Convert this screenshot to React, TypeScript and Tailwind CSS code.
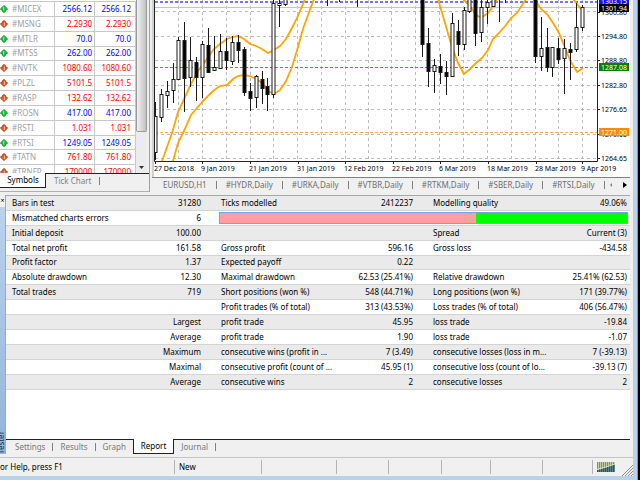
import { useState } from "react";

interface Quote {
  symbol: string;
  price: string;
  up: boolean;
}

const quotes: Quote[] = [
  { symbol: "#MICEX", price: "2566.12", up: true },
  { symbol: "#MSNG", price: "2.2930", up: false },
  { symbol: "#MTLR", price: "70.0", up: true },
  { symbol: "#MTSS", price: "262.00", up: true },
  { symbol: "#NVTK", price: "1080.60", up: false },
  { symbol: "#PLZL", price: "5101.5", up: false },
  { symbol: "#RASP", price: "132.62", up: false },
  { symbol: "#ROSN", price: "417.00", up: true },
  { symbol: "#RSTI", price: "1.031", up: false },
  { symbol: "#RTSI", price: "1249.05", up: true },
  { symbol: "#TATN", price: "761.80", up: false },
  { symbol: "#TRNFP", price: "170000", up: false },
];

const chartTabs = [
  "EURUSD,H1",
  "#HYDR,Daily",
  "#URKA,Daily",
  "#VTBR,Daily",
  "#RTKM,Daily",
  "#SBER,Daily",
  "#RTSI,Daily",
];

const reportRows: string[][] = [
  ["Initial deposit", "100.00", "", "", "Spread", "Current (3)"],
  ["Total net profit", "161.58", "Gross profit", "596.16", "Gross loss", "-434.58"],
  ["Profit factor", "1.37", "Expected payoff", "0.22", "", ""],
  ["Absolute drawdown", "12.30", "Maximal drawdown", "62.53 (25.41%)", "Relative drawdown", "25.41% (62.53)"],
  ["Total trades", "719", "Short positions (won %)", "548 (44.71%)", "Long positions (won %)", "171 (39.77%)"],
  ["", "", "Profit trades (% of total)", "313 (43.53%)", "Loss trades (% of total)", "406 (56.47%)"],
  ["", "Largest", "profit trade", "45.95", "loss trade", "-19.84"],
  ["", "Average", "profit trade", "1.90", "loss trade", "-1.07"],
  ["", "Maximum", "consecutive wins (profit in ...", "7 (3.49)", "consecutive losses (loss in m...", "7 (-39.13)"],
  ["", "Maximal", "consecutive profit (count of ...", "45.95 (1)", "consecutive loss (count of lo...", "-39.13 (7)"],
  ["", "Average", "consecutive wins", "2", "consecutive losses", "2"],
];

const testerTabs = ["Settings", "Results", "Graph", "Report", "Journal"];

// x, high, low, body top, body bottom, bearish
type Candle = [number, number, number, number, number, boolean];

const candles: Candle[] = [
  [155, 102, 160, 116, 152, false],
  [161, 89, 122, 94, 117, false],
  [167, 81, 108, 91, 95, false],
  [173, 63, 103, 79, 90, false],
  [178, 37, 80, 40, 79, false],
  [184, 22, 112, 40, 78, true],
  [190, 37, 87, 60, 77, false],
  [196, 57, 101, 62, 77, true],
  [202, 41, 98, 44, 77, false],
  [208, 28, 73, 45, 72, true],
  [214, 36, 71, 67, 70, false],
  [220, 34, 68, 51, 68, false],
  [226, 38, 70, 51, 60, true],
  [232, 36, 65, 42, 61, false],
  [238, 35, 63, 42, 50, true],
  [244, 47, 96, 49, 92, true],
  [250, 83, 111, 91, 98, true],
  [256, 75, 108, 76, 97, false],
  [262, 71, 104, 79, 88, true],
  [267, 78, 111, 86, 94, true],
  [273, -2, 98, 3, 94, false],
  [279, -2, 27, 3, 5, false],
  [285, -2, 6, -4, 4, false],
  [327, -2, 6, -2, -1, true],
  [339, -2, 2, -2, -1, true],
  [357, -2, 7, -2, -1, true],
  [422, -2, 57, -2, 44, true],
  [428, 28, 87, 43, 71, true],
  [434, 59, 93, 65, 71, false],
  [440, 54, 84, 66, 72, true],
  [446, 61, 95, 72, 76, true],
  [452, 13, 77, 23, 76, false],
  [458, 20, 56, 31, 44, true],
  [464, 7, 50, 10, 44, false],
  [469, -2, 13, -4, 11, false],
  [475, -2, 46, -4, 33, true],
  [481, -2, 42, 7, 32, false],
  [487, -2, 24, 2, 7, false],
  [493, -2, 7, -4, 6, false],
  [499, -2, 22, -4, -3, true],
  [505, -2, 3, -4, -3, true],
  [535, -2, 63, -4, 56, true],
  [541, 17, 71, 48, 56, false],
  [547, 28, 72, 47, 67, true],
  [552, 47, 77, 47, 67, false],
  [558, 38, 64, 48, 59, true],
  [564, 39, 94, 48, 58, false],
  [570, 43, 80, 49, 52, true],
  [576, 3, 52, 27, 49, false],
  [582, 5, 31, 7, 27, false],
];

const bands = [
  "162,161 172,133 178,112 185,97 191,84 198,71 207,59 213,50 220,44 227,39 232,37 238,36 244,39 250,44 256,46 262,49 268,53 274,50 280,46 286,39 292,28 298,16 305,-1",
  "173,161 178,143 184,131 191,115 203,101 213,91 220,86 227,85 233,79 238,76 244,75 250,76 256,79 262,83 268,91 274,94 280,90 286,81 292,67 298,47 303,29 308,15 314,-1",
  "438,-1 445,23 452,47 458,63 464,74 470,69 476,63 482,58 488,50 493,39 499,33 506,25 511,18 517,13 526,-1",
  "463,-1 470,6 476,15 480,17 484,16 488,13 494,5 497,-1",
  "535,0 541,9 547,14 553,23 559,33 565,48 571,62 577,72 583,68",
  "573,-1 577,4 582,10",
];

const gridX = [178, 202, 226, 250, 273, 297, 321, 345, 368, 391, 415, 439, 463, 487, 511, 535, 558, 582];
const gridY = [11, 36, 60, 85, 109, 134, 158];

const dates: [number, string][] = [
  [154, "27 Dec 2018"],
  [201, "9 Jan 2019"],
  [249, "21 Jan 2019"],
  [297, "31 Jan 2019"],
  [344, "12 Feb 2019"],
  [392, "22 Feb 2019"],
  [439, "6 Mar 2019"],
  [487, "18 Mar 2019"],
  [535, "28 Mar 2019"],
  [581, "9 Apr 2019"],
];

const prices: [number, string][] = [
  [12, "1300.80"],
  [36, "1294.80"],
  [60, "1288.80"],
  [85, "1282.80"],
  [109, "1276.65"],
  [134, "1270.65"],
  [158, "1264.65"],
];

const priceTags: [number, string, string][] = [
  [1, "1303.15", "#1414f0"],
  [8, "1301.94", "#000000"],
  [67, "1287.08", "#0a7d0a"],
  [132, "1271.00", "#ff8c00"],
];

const DirectionIcon = ({ up }: { up: boolean }) => (
  <svg width="8" height="8" viewBox="0 0 8 8" className={up ? "" : "rotate-180"}>
    <path
      d="M4 0.5 L7.5 3.8 L7 4.8 L5.4 5 L5.4 6.6 L4 7.5 L2.6 6.6 L2.6 5 L1 4.8 L0.5 3.8 Z"
      fill={up ? "#22c840" : "#ee5a2a"}
      stroke={up ? "#0b7d1e" : "#a03410"}
      strokeWidth="0.8"
    />
    <path d="M3.6 2 L3.6 5.6" stroke={up ? "#a6f5ae" : "#ffc0a0"} strokeWidth="0.9" />
  </svg>
);

/* -------------------- PRICE CHART -------------------- */
const PriceChart = () => (
  <svg
    viewBox="152 0 478 177"
    className="block w-full bg-white font-['Noto_Sans','Open_Sans',sans-serif] text-[7px]"
  >
    <g stroke="#bdbdbd" strokeDasharray="3 3">
      {gridX.map((x) => (
        <path key={x} d={`M${x + 0.5} 0 V161`} />
      ))}
      {gridY.map((y) => (
        <path key={y} d={`M155 ${y + 0.5} H598`} />
      ))}
    </g>
    <path d="M155 7.5 H598" stroke="#c4c4c4" />
    <path d="M155 2 H598" stroke="#7474ff" strokeWidth="2" strokeDasharray="3 2" />
    <path d="M155 67.5 H598" stroke="#3aa63a" strokeDasharray="3 2" />
    <path d="M155 132.5 H598" stroke="#ffa94d" strokeDasharray="3 2" />

    {bands.map((points) => (
      <polyline key={points} points={points} fill="none" stroke="#ffa500" strokeWidth="1.8" />
    ))}

    {candles.map(([x, high, low, top, bottom, bearish]) => (
      <g key={x} stroke="#1a1a1a">
        <path d={`M${x + 0.5} ${high} V${low}`} />
        <rect
          x={x - 1}
          y={top + 0.5}
          width="3"
          height={bottom - top}
          fill={bearish ? "#000" : "#fff"}
        />
      </g>
    ))}

    <rect x="152" y="0" width="2" height="177" fill="#d0d0d0" />
    <path d="M154.5 0 V161.5 H597.5 V0" fill="none" stroke="#222" />

    {dates.map(([x, label]) => (
      <g key={label}>
        <path d={`M${x + 1.5} 161 V164`} stroke="#222" />
        <text x={x} y="171" fill="#000">
          {label}
        </text>
      </g>
    ))}
    {prices.map(([y, label]) => (
      <g key={label}>
        <path d={`M598 ${y + 0.5} H600`} stroke="#222" />
        <text x="601" y={y + 3} fill="#000">
          {label}
        </text>
      </g>
    ))}
    {priceTags.map(([y, label, color]) => (
      <g key={label}>
        <rect x="599" y={y - 4} width="30" height="8" fill={color} />
        <text x="601" y={y + 3} fill="#fff">
          {label}
        </text>
      </g>
    ))}
  </svg>
);

/* -------------------- MARKET WATCH -------------------- */
const MarketWatch = () => (
  <div className="flex w-[150px] shrink-0 flex-col border-r border-[#a0a0a0]">
    <div className="flex h-[173px] overflow-hidden bg-white">
      <table className="mt-px h-[178px] flex-1 table-fixed border-collapse">
        <colgroup>
          <col className="w-[55px]" />
          <col className="w-10" />
          <col className="w-[41px]" />
        </colgroup>
        <tbody>
          {quotes.map((q) => (
            <tr key={q.symbol} className="border-t border-[#c8c8c8]">
              <td className="border-r border-[#c8c8c8] p-0 text-[#a0a0a0]">
                <div className="flex items-center gap-1">
                  <DirectionIcon up={q.up} />
                  {q.symbol}
                </div>
              </td>
              <td
                className={`border-r border-[#c8c8c8] p-0 pr-0.5 text-right ${q.up ? "text-[#0000ff]" : "text-[#ff0000]"}`}
              >
                {q.price}
              </td>
              <td
                className={`border-r border-[#c8c8c8] p-0 pr-1 text-right ${q.up ? "text-[#0000ff]" : "text-[#ff0000]"}`}
              >
                {q.price}
              </td>
            </tr>
          ))}
        </tbody>
      </table>
      <div className="flex w-[11px] flex-col items-center justify-between bg-[#ececec] pb-1">
        <div className="h-[132px] w-full rounded-b-xs border border-t-0 border-[#9a9a9a] bg-linear-to-r from-[#f2f2f2] to-[#bfc0c4]" />
        <svg width="5" height="3" viewBox="0 0 5 3">
          <path d="M0 0 H5 L2.5 3 Z" fill="#333" />
        </svg>
      </div>
      <div className="w-[2px] bg-[#f0f0f0]" />
    </div>
    <div className="flex h-[15px]">
      <button className="w-[46px] border-r border-b border-[#222] bg-white pl-px text-black">
        Symbols
      </button>
      <div className="flex flex-1 items-center border-t border-[#222] text-[#808080]">
        <button className="px-2">Tick Chart</button>
        <span className="h-2 w-px bg-[#808080]" />
      </div>
    </div>
    <div className="h-1 border-b border-[#b0b0b0]" />
  </div>
);

const ChartTabs = () => (
  <div className="flex h-[15px] items-center border-t border-[#808080] bg-[#f0f0f0] pl-0.5 text-[#6e6e6e]">
    {chartTabs.map((name) => (
      <div key={name} className="flex items-center">
        <button className="px-[9px] whitespace-nowrap">{name}</button>
        <span className="h-2 w-px bg-[#808080]" />
      </div>
    ))}
    <button aria-label="Scroll left" className="pl-1">
      <svg width="4" height="6" viewBox="0 0 4 6">
        <path d="M3 1 L1 3 L3 5 Z" fill="#808080" />
      </svg>
    </button>
    <button aria-label="Scroll right" className="pl-2.5">
      <svg width="4" height="6" viewBox="0 0 4 6">
        <path d="M0 0 L4 3 L0 6 Z" fill="#000" />
      </svg>
    </button>
  </div>
);

/* -------------------- TEST REPORT -------------------- */
const Report = () => (
  <table className="h-[194px] w-full table-fixed border-collapse whitespace-nowrap text-black">
    <colgroup>
      <col className="w-[135px]" />
      <col className="w-[60px]" />
      <col className="w-[138px]" />
      <col className="w-[74px]" />
      <col className="w-[139px]" />
      <col className="w-[78px]" />
    </colgroup>
    <tbody>
      <tr className="border-b border-[#d4d4d4] bg-[#eaeaea]">
        <td className="p-0 pl-1.5">Bars in test</td>
        <td className="p-0 text-right">31280</td>
        <td className="p-0 pl-5">Ticks modelled</td>
        <td className="p-0 text-right">2412237</td>
        <td className="p-0 pl-5">Modelling quality</td>
        <td className="p-0 pr-[3px] text-right">49.06%</td>
      </tr>
      <tr className="border-b border-[#d4d4d4] bg-white">
        <td className="p-0 pl-1.5">Mismatched charts errors</td>
        <td className="p-0 text-right">6</td>
        <td colSpan={4} className="p-0 pr-0.5 pl-[18px]">
          <div className="-my-px flex h-3 border border-[#6fa8dc] bg-[#00ff00]">
            <div className="w-[63%] bg-[#ff9f9f]" />
          </div>
        </td>
      </tr>
      {reportRows.map((row, i) => (
        <tr key={i} className="border-b border-[#d4d4d4] odd:bg-[#eaeaea] even:bg-white">
          <td className="p-0 pl-1.5">{row[0]}</td>
          <td className="p-0 text-right">{row[1]}</td>
          <td className="p-0 pl-5">{row[2]}</td>
          <td className="p-0 text-right">{row[3]}</td>
          <td className="p-0 pl-5">{row[4]}</td>
          <td className="p-0 pr-[3px] text-right">{row[5]}</td>
        </tr>
      ))}
    </tbody>
  </table>
);

const StatusBar = () => (
  <div className="flex h-[19px] items-center border-t border-[#c4c4c4] bg-[#f0f0f0] text-black">
    <span className="w-[174px] shrink-0">or Help, press F1</span>
    <div className="grid h-3.5 flex-1 grid-cols-[87fr_76fr_52fr_53fr_50fr_52fr_49fr] items-stretch divide-x divide-[#b4b4b4] border-x border-[#b4b4b4]">
      <span className="flex items-center pl-1">New</span>
      <span />
      <span />
      <span />
      <span />
      <span />
      <span />
    </div>
    <div className="flex w-10 shrink-0 items-center justify-between self-stretch pl-1">
      <svg width="18" height="10" viewBox="0 0 18 10">
        <g fill="#7f9a35">
          {[0, 2, 4, 6, 8, 10, 12, 14, 16].map((x) => (
            <rect key={x} x={x} y="0" width="1.4" height="10" />
          ))}
        </g>
        <g fill="#1d5478">
          {[0, 2, 4, 6, 8, 10, 12, 14, 16].map((x) => (
            <rect key={x} x={x} y={8 - x * 0.35} width="1.6" height={2 + x * 0.35} />
          ))}
        </g>
        <path d="M0 7.5 L9 5 L18 2" fill="none" stroke="#dfe8d0" strokeWidth="0.9" />
      </svg>
      <svg width="12" height="12" viewBox="0 0 12 12" className="self-end">
        <path d="M1 12 L12 1 M4 12 L12 4 M7 12 L12 7 M10 12 L12 10" stroke="#8c8c8c" />
      </svg>
    </div>
  </div>
);

export default function App() {
  const [tab, setTab] = useState("Report");

  return (
    <div className="flex min-h-screen bg-[#f0f0f0] font-['Noto_Sans','Open_Sans',sans-serif] text-[8px] leading-[10px]">
      <div className="flex min-w-0 flex-1 flex-col">
        <div className="flex">
          <MarketWatch />
          <div className="flex min-w-0 flex-1 flex-col pr-[3px] pl-0.5">
            <PriceChart />
            <ChartTabs />
          </div>
        </div>

        <div className="mt-[3px] flex flex-1">
          {/* tester side caption */}
          <div className="flex w-[5px] shrink-0 flex-col justify-between overflow-hidden bg-linear-to-b from-[#bcd3ee] to-[#93b4dc]">
            <button aria-label="Close" className="h-3 w-full bg-[#f0f0f0] text-[7px]">
              ×
            </button>
            <span className="h-6 rotate-180 self-end leading-[8px] text-[#1c2c44] [writing-mode:vertical-rl]">
              Tester
            </span>
          </div>
          <div className="mr-[3px] flex min-w-0 flex-1 flex-col border-t border-l border-[#a8a8a8] bg-white">
            <Report />
            <div className="flex-1" />
            <div className="flex h-[15px] bg-[#f0f0f0] text-[#7a7a7a]">
              <div className="w-0.5 border-t border-[#222]" />
              {testerTabs.map((name) => (
                <div
                  key={name}
                  className={
                    name === tab
                      ? "flex border-x border-b border-[#222] bg-white text-black"
                      : "flex items-center border-t border-[#222]"
                  }
                >
                  <button onClick={() => setTab(name)} className="px-[7px]">
                    {name}
                  </button>
                  {name !== tab && name !== "Graph" && <span className="h-2 w-px bg-[#808080]" />}
                </div>
              ))}
              <div className="flex-1 border-t border-[#222]" />
            </div>
          </div>
        </div>

        <div className="h-[3px]" />
        <StatusBar />
        <div className="h-1 bg-[#b9d1ea]" />
      </div>

      {/* window frame */}
      <div className="w-1 shrink-0 bg-[#b9d1ea]" />
      <div className="w-px shrink-0 bg-[#3fb8d0]" />
      <div className="w-0.5 shrink-0 bg-black" />
    </div>
  );
}
